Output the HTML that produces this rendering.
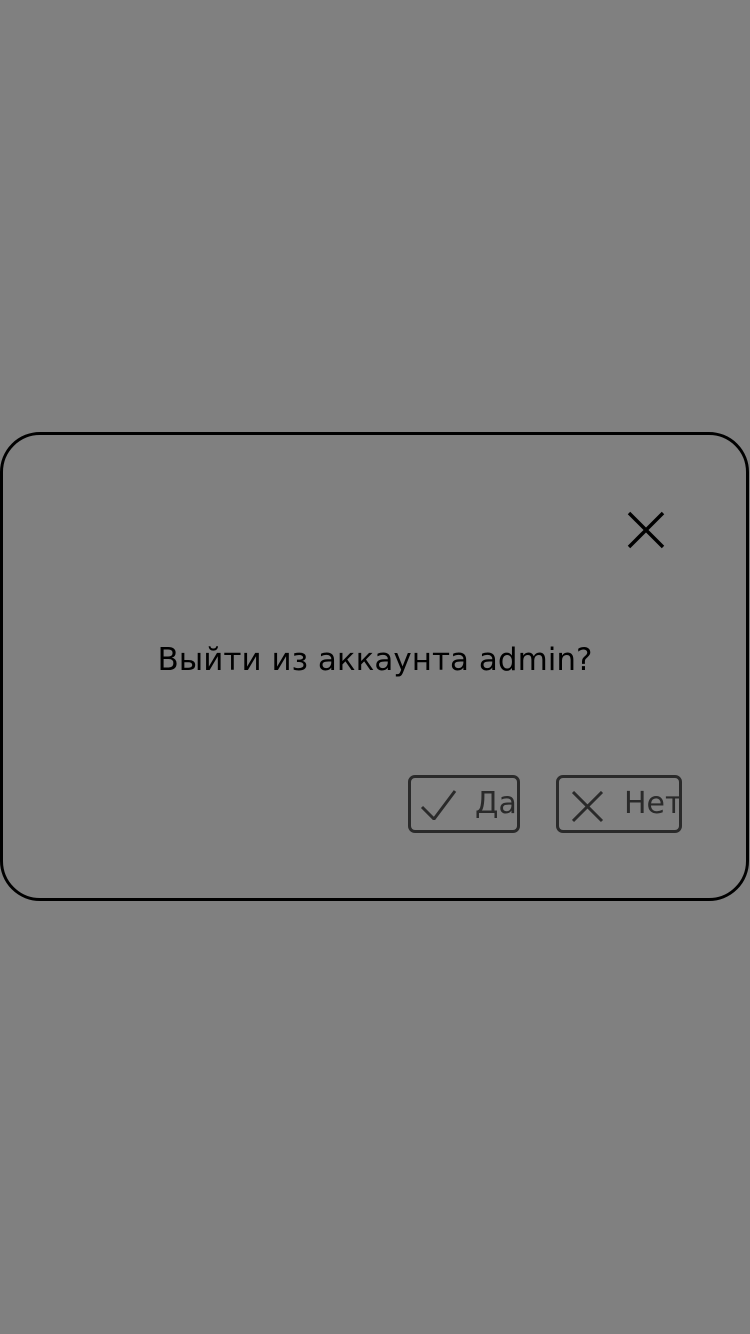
<!DOCTYPE html>
<html><head><meta charset="utf-8"><style>
html,body{margin:0;padding:0;width:750px;height:1334px;background:#808080;overflow:hidden;font-family:"DejaVu Sans","Liberation Sans",sans-serif}
.dlg{position:absolute;left:0px;top:432px;width:743px;height:463px;border:3.5px solid #000;border-radius:40px}
.q{position:absolute;left:0;top:638px;width:750px;text-align:center;font-size:31px;color:#000;line-height:44px}
.btn{position:absolute;top:775px;height:52px;border:3.5px solid #2a2a2a;border-radius:7px;overflow:hidden;color:#2a2a2a;font-size:30px;line-height:52px;box-sizing:content-box}
.btn span{position:absolute;top:0}
</style></head><body>
<div class="dlg"></div>
<svg style="position:absolute;left:626px;top:510px" width="40" height="40"><path d="M3 3L37 37M37 3L3 37" stroke="#000" stroke-width="3.5" fill="none"/></svg>
<div class="q">Выйти из аккаунта admin?</div>
<div class="btn" style="left:408px;width:106px">
<svg style="position:absolute;left:9px;top:12px" width="40" height="30"><path d="M2 17L14 29L35 1" stroke="#2a2a2a" stroke-width="3" fill="none"/></svg>
<span style="left:64px">Да</span></div>
<div class="btn" style="left:556px;width:120px">
<svg style="position:absolute;left:13px;top:13px" width="32" height="32"><path d="M1 1L30 30M30 1L1 30" stroke="#2a2a2a" stroke-width="3" fill="none"/></svg>
<span style="left:65px">Нет</span></div>
</body></html>
